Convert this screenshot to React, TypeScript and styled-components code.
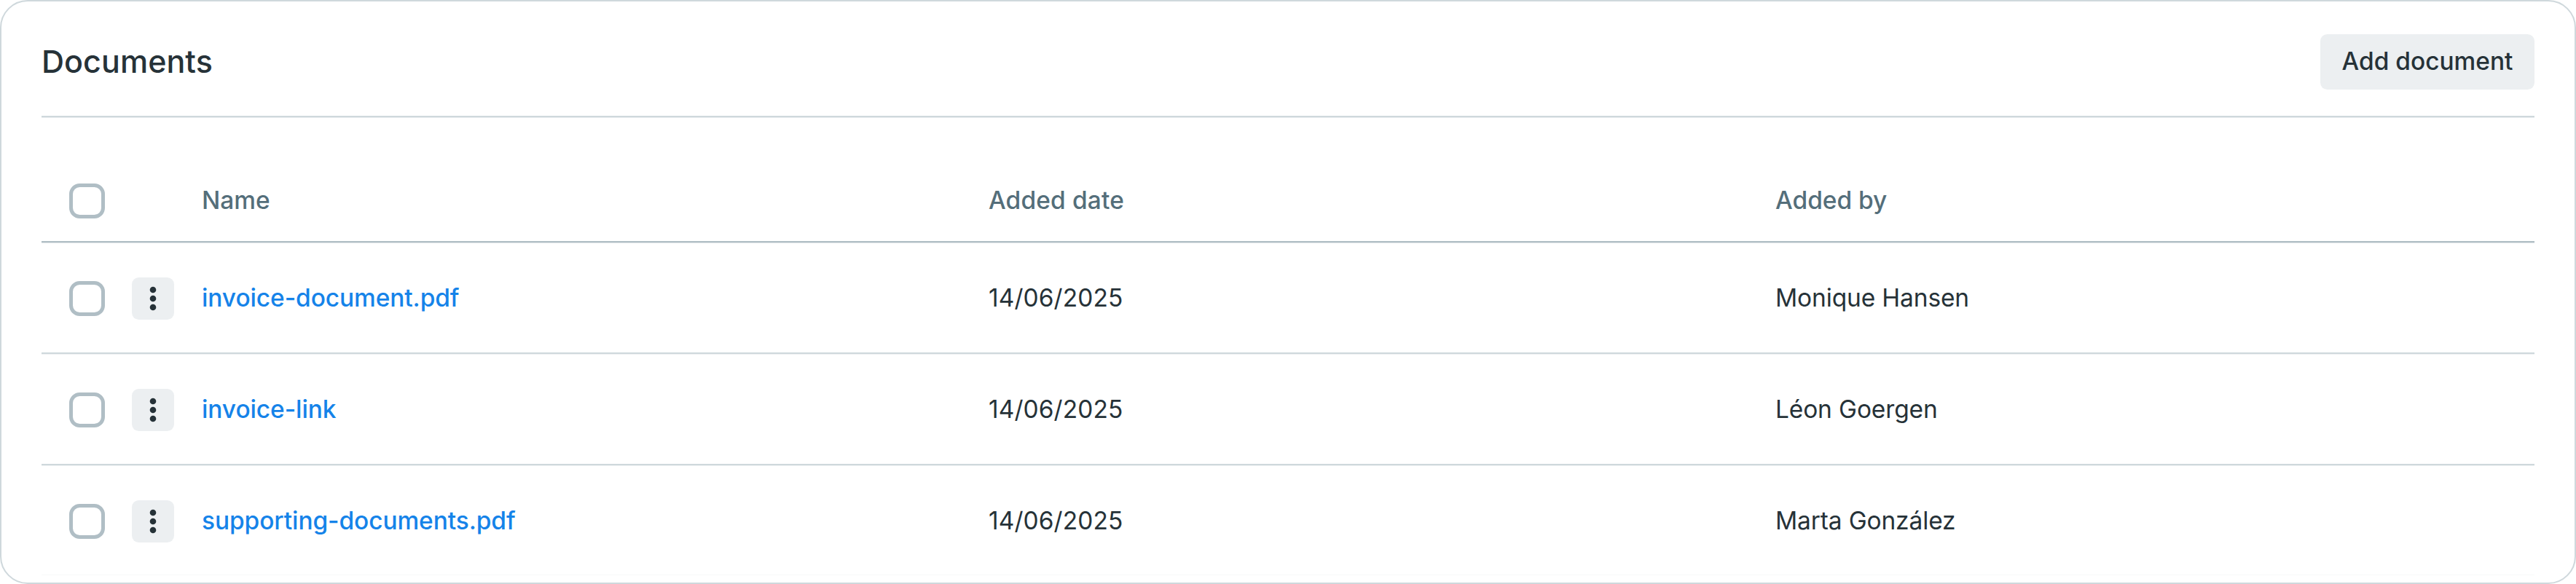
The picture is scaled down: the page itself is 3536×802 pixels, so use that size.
import React from 'react';
import styled, { createGlobalStyle } from 'styled-components';

const GlobalStyle = createGlobalStyle`
  * { box-sizing: border-box; }
  body { margin: 0; background: #fff; }
`;

const Card = styled.section`
  width: 100%;
  height: 802px;
  padding: 0 55px;
  overflow: hidden;
  background: #fff;
  border: 2px solid #cfd8dc;
  border-radius: 38px;
  color: #263238;
  font-family: Inter, 'Liberation Sans', sans-serif;
  font-size: 33.46px;
  line-height: 48px;
`;

const Header = styled.header`
  display: flex;
  align-items: flex-start;
  justify-content: space-between;
  height: 159px;
  padding-top: 45px;
  border-bottom: 2px solid #cfd8dc;
  box-shadow: 0 1px 0 #e9edef;
`;

const Title = styled.h2`
  margin: 0;
  padding-top: 7px;
  font-size: 43px;
  font-weight: 500;
  line-height: 60px;
  letter-spacing: 0.05px;
`;

const AddButton = styled.button`
  width: 294px;
  height: 76px;
  padding: 0 0 2px;
  border: 0;
  border-radius: 9.5px;
  background: #eceff1;
  color: inherit;
  font: inherit;
  font-weight: 500;
  white-space: nowrap;
`;

const Table = styled.div`
  padding-top: 57px;
`;

const Row = styled.div<{ $head?: boolean }>`
  display: grid;
  grid-template-columns: 124px 96px 1080px 1080px 1fr;
  align-items: center;
  height: ${(p) => (p.$head ? 115 : 153)}px;
  padding-top: 3px;
  border-bottom: 2px solid ${(p) => (p.$head ? '#b0bec5' : '#cfd8dc')};
  box-shadow: 0 1px 0 ${(p) => (p.$head ? '#dce2e5' : '#eef1f2')};
  color: ${(p) => (p.$head ? '#546e7a' : 'inherit')};
  font-weight: ${(p) => (p.$head ? 500 : 400)};

  &:last-child {
    border-bottom-color: transparent;
    box-shadow: inset 0 -1px 0 #f8f9f9;
  }
`;

const Checkbox = styled.span`
  width: 49px;
  height: 48px;
  margin-left: 38px;
  border: 5px solid #b0bec5;
  border-radius: 14.5px;
`;

const MenuButton = styled.button`
  display: flex;
  align-items: center;
  justify-content: center;
  width: 58px;
  height: 58px;
  padding: 0;
  border: 0;
  border-radius: 9.5px;
  background: #eceff1;
  color: #263238;
`;

const Cell = styled.span<{ $tracking?: number }>`
  padding-bottom: 2px;
  letter-spacing: ${(p) => p.$tracking ?? 0}px;
  white-space: nowrap;
`;

const DocLink = styled.a`
  color: #1583e9;
  font-weight: 500;
  text-decoration: none;
`;

const documents = [
  { name: 'invoice-document.pdf', date: '14/06/2025', by: 'Monique Hansen' },
  { name: 'invoice-link', date: '14/06/2025', by: 'Léon Goergen' },
  { name: 'supporting-documents.pdf', date: '14/06/2025', by: 'Marta González' },
];

const DotsIcon = () => (
  <svg width="10" height="34" viewBox="0 0 10 34" fill="currentColor">
    <circle cx="5" cy="5" r="4.3" />
    <circle cx="5" cy="17" r="4.3" />
    <circle cx="5" cy="29" r="4.3" />
  </svg>
);

export default function App() {
  return (
    <>
      <GlobalStyle />
      <Card>
        <Header>
          <Title>Documents</Title>
          <AddButton>Add document</AddButton>
        </Header>
        <Table>
          <Row $head>
            <Checkbox />
            <span />
            <Cell>Name</Cell>
            <Cell $tracking={0.16}>Added date</Cell>
            <Cell>Added by</Cell>
          </Row>
          {documents.map((doc) => (
            <Row key={doc.name}>
              <Checkbox />
              <MenuButton aria-label="Document actions">
                <DotsIcon />
              </MenuButton>
              <Cell $tracking={-0.08}>
                <DocLink href="#">{doc.name}</DocLink>
              </Cell>
              <Cell $tracking={0.1}>{doc.date}</Cell>
              <Cell $tracking={-0.12}>{doc.by}</Cell>
            </Row>
          ))}
        </Table>
      </Card>
    </>
  );
}
